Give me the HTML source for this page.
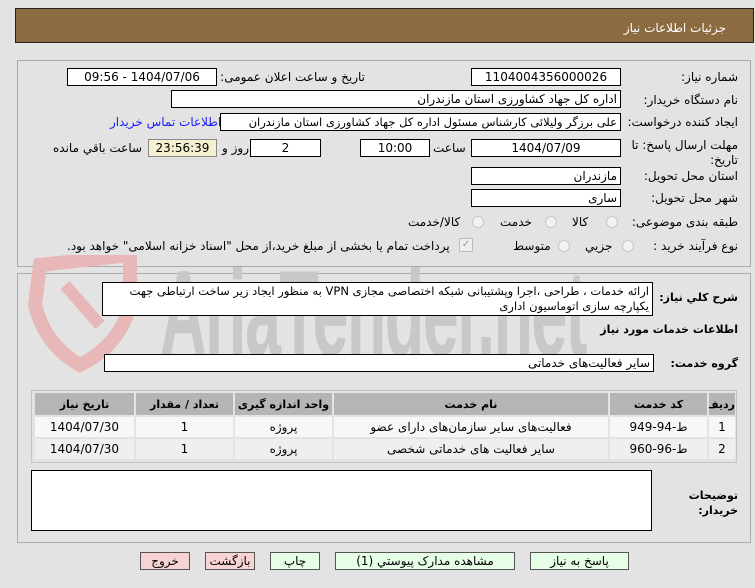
<!DOCTYPE html>
<html><head><meta charset="utf-8"><style>
body{margin:0;width:755px;height:588px;background:#e3e3e3;font-family:Tahoma,"DejaVu Sans","Liberation Sans",sans-serif;font-size:12px;position:relative;overflow:hidden;direction:rtl}
.a{position:absolute}
.box{position:absolute;background:#fff;border:1px solid #000;box-sizing:border-box;height:18px;line-height:16px;text-align:center;font-size:12px;white-space:nowrap;overflow:hidden}
.lbl{position:absolute;white-space:nowrap;font-size:12px;color:#000;line-height:16px}
.radio{position:absolute;width:12px;height:12px;border-radius:50%;border:1px solid #c8c8c8;background:#f2f2f2;box-sizing:border-box}
.btn{position:absolute;top:552px;height:18px;border:1px solid #555;box-sizing:border-box;text-align:center;line-height:16px;font-size:12px}
table{border-collapse:separate;border-spacing:2px;table-layout:fixed}
td{text-align:center;font-size:12px;height:20px;padding:0;white-space:nowrap;overflow:hidden}
</style></head><body>
<div class="a" style="left:15px;top:8px;width:739px;height:35px;background:#8c6b40;border:1px solid #222;box-sizing:border-box"></div>
<div class="lbl" style="right:29px;top:20px;color:#fff">جزئیات اطلاعات نیاز</div>

<div class="a" style="left:17px;top:60px;width:734px;height:207px;border:1px solid #aaa;box-sizing:border-box;background:#e3e3e3"></div>
<div class="a" style="left:17px;top:273px;width:734px;height:270px;border:1px solid #aaa;box-sizing:border-box;background:#e3e3e3"></div>

<!-- watermark -->
<div class="a" style="left:160px;top:252px;font:bold 122px 'Liberation Sans',sans-serif;line-height:122px;color:#c8c8c8;direction:ltr;letter-spacing:-3px;transform:scaleX(0.53);transform-origin:left top">AriaTender.net</div>
<svg class="a" style="left:20px;top:255px" width="130" height="120"><path d="M20 10 L110 0 L110 50 Q100 90 60 110 Q25 90 15 50 Z" fill="none" stroke="#e8b8b8" stroke-width="14"/><path d="M45 30 L80 70" stroke="#e8b8b8" stroke-width="12"/></svg>

<div class="lbl" style="right:17px;top:69px">شماره نیاز:</div>
<div class="box" style="left:471px;top:68px;width:150px">1104004356000026</div>
<div class="lbl" style="right:390px;top:69px">تاریخ و ساعت اعلان عمومی:</div>
<div class="box" style="left:67px;top:68px;width:150px">1404/07/06 - 09:56</div>

<div class="lbl" style="right:17px;top:92px">نام دستگاه خریدار:</div>
<div class="box" style="left:171px;top:90px;width:450px;text-align:right;padding-right:3px">اداره کل جهاد کشاورزی استان مازندران</div>

<div class="lbl" style="right:17px;top:114px">ایجاد کننده درخواست:</div>
<div class="box" style="left:220px;top:113px;width:401px;text-align:right;padding-right:3px;font-size:11.5px">علی  برزگر ولیلائی کارشناس مسئول  اداره کل جهاد کشاورزی استان مازندران</div>
<div class="lbl" style="left:110px;top:114px;color:#1a1aff">اطلاعات تماس خریدار</div>

<div class="lbl" style="right:17px;top:138px;width:120px;line-height:15px;white-space:normal;text-align:right">مهلت ارسال پاسخ: تا تاریخ:</div>
<div class="box" style="left:471px;top:139px;width:150px">1404/07/09</div>
<div class="lbl" style="left:433px;top:140px">ساعت</div>
<div class="box" style="left:360px;top:139px;width:70px">10:00</div>
<div class="box" style="left:250px;top:139px;width:71px">2</div>
<div class="lbl" style="left:222px;top:140px">روز و</div>
<div class="box" style="left:148px;top:139px;width:69px;background:#f5f1d0;border-color:#888">23:56:39</div>
<div class="lbl" style="left:53px;top:140px">ساعت باقي مانده</div>

<div class="lbl" style="right:17px;top:168px">استان محل تحویل:</div>
<div class="box" style="left:471px;top:167px;width:150px;text-align:right;padding-right:3px">مازندران</div>
<div class="lbl" style="right:17px;top:190px">شهر محل تحویل:</div>
<div class="box" style="left:471px;top:189px;width:150px;text-align:right;padding-right:3px">ساری</div>

<div class="lbl" style="right:17px;top:214px">طبقه بندی موضوعی:</div>
<div class="radio" style="left:606px;top:216px"></div><div class="lbl" style="left:572px;top:214px">کالا</div>
<div class="radio" style="left:545px;top:216px"></div><div class="lbl" style="left:500px;top:214px">خدمت</div>
<div class="radio" style="left:472px;top:216px"></div><div class="lbl" style="left:408px;top:214px">کالا/خدمت</div>

<div class="lbl" style="right:17px;top:238px">نوع فرآیند خرید :</div>
<div class="radio" style="left:622px;top:240px"></div><div class="lbl" style="left:585px;top:238px">جزيي</div>
<div class="radio" style="left:558px;top:240px"></div><div class="lbl" style="left:513px;top:238px">متوسط</div>
<div class="a" style="left:459px;top:238px;width:12px;height:12px;border:1px solid #bbb;background:#eee;font-size:10px;line-height:11px;color:#999;text-align:center">✓</div>
<div class="lbl" style="left:67px;top:238px">پرداخت تمام یا بخشی از مبلغ خرید،از محل "اسناد خزانه اسلامی" خواهد بود.</div>

<div class="lbl" style="right:17px;top:290px;font-weight:bold;font-size:11px">شرح کلي نياز:</div>
<div class="a" style="left:102px;top:282px;width:551px;height:34px;background:#fff;border:1px solid #000;box-sizing:border-box;padding:1px 3px;line-height:15px;text-align:right;font-size:11.5px">ارائه خدمات ، طراحی ،اجرا وپشتیبانی شبکه اختصاصی مجازی VPN به منظور  ایجاد زیر ساخت ارتباطی جهت یکپارچه سازی اتوماسیون اداری</div>
<div class="lbl" style="right:17px;top:322px;font-weight:bold;font-size:11px">اطلاعات خدمات مورد نياز</div>
<div class="lbl" style="right:17px;top:356px;font-weight:bold;font-size:11px">گروه خدمت:</div>
<div class="box" style="left:104px;top:354px;width:550px;text-align:right;padding-right:3px">سایر فعالیت‌های خدماتی</div>

<div class="a" style="left:31px;top:390px;width:706px;height:73px;border:1px solid #c4c4c4;box-sizing:border-box;background:#e3e3e3;overflow:hidden">
<table style="width:704px;margin:0 -1px;"><colgroup><col style="width:26px"><col style="width:97px"><col><col style="width:97px"><col style="width:97px"><col style="width:99px"></colgroup><tr style="background:#b5b5b5;font-weight:bold">
<td style="height:22px;font-size:11px">رديف</td><td style="font-size:11px">کد خدمت</td><td style="font-size:11px">نام خدمت</td><td style="font-size:11px">واحد اندازه گیری</td><td style="font-size:11px">تعداد / مقدار</td><td style="font-size:11px">تاریخ نیاز</td></tr>
<tr style="background:#f7f7f7"><td>1</td><td>ط-94-949</td><td>فعالیت‌های سایر سازمان‌های دارای عضو</td><td>پروژه</td><td>1</td><td>1404/07/30</td></tr>
<tr style="background:#efefef"><td>2</td><td>ط-96-960</td><td>سایر فعالیت های خدماتی شخصی</td><td>پروژه</td><td>1</td><td>1404/07/30</td></tr>
</table></div>

<div class="a" style="left:31px;top:470px;width:621px;height:61px;background:#fff;border:1px solid #000;box-sizing:border-box"></div>
<div class="lbl" style="right:17px;top:488px;font-weight:bold;font-size:11px;line-height:15px;text-align:right">توضیحات<br>خریدار:</div>

<div class="btn" style="left:530px;width:99px;background:#e6fde6">پاسخ به نیاز</div>
<div class="btn" style="left:335px;width:180px;background:#e6fde6">مشاهده مدارک پیوستي (1)</div>
<div class="btn" style="left:270px;width:50px;background:#e6fde6">چاپ</div>
<div class="btn" style="left:205px;width:50px;background:#f8d3d3">بازگشت</div>
<div class="btn" style="left:140px;width:50px;background:#f8d3d3">خروج</div>
</body></html>
